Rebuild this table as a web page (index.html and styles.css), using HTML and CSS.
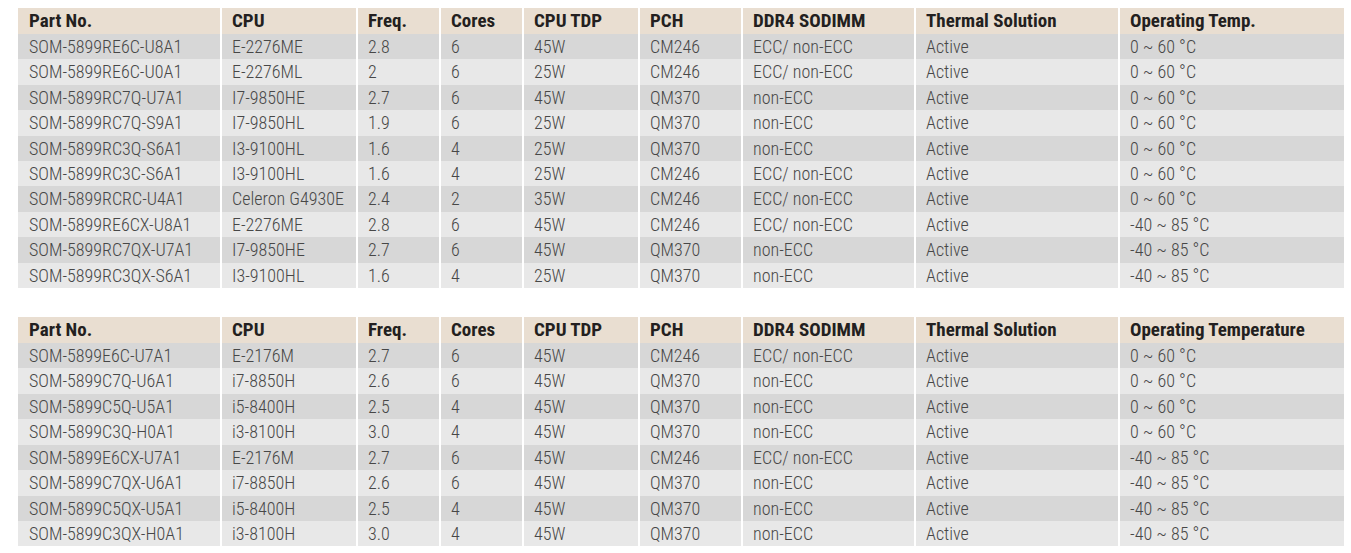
FILE: index.html
```html
<!DOCTYPE html>
<html lang="en">
<head>
<meta charset="utf-8">
<title>SOM-5899 Ordering Information</title>
<link rel="stylesheet" href="styles.css">
</head>
<body>
<div class="page">
<table class="spec">
  <colgroup>
    <col class="c1"><col class="c2"><col class="c3"><col class="c4"><col class="c5"><col class="c6"><col class="c7"><col class="c8"><col class="c9">
  </colgroup>
  <thead>
    <tr><th>Part No.</th><th>CPU</th><th>Freq.</th><th>Cores</th><th>CPU TDP</th><th>PCH</th><th>DDR4 SODIMM</th><th>Thermal Solution</th><th>Operating Temp.</th></tr>
  </thead>
  <tbody>
    <tr><td>SOM-5899RE6C-U8A1</td><td>E-2276ME</td><td>2.8</td><td>6</td><td>45W</td><td>CM246</td><td>ECC/ non-ECC</td><td>Active</td><td>0 ~ 60 °C</td></tr>
    <tr><td>SOM-5899RE6C-U0A1</td><td>E-2276ML</td><td>2</td><td>6</td><td>25W</td><td>CM246</td><td>ECC/ non-ECC</td><td>Active</td><td>0 ~ 60 °C</td></tr>
    <tr><td>SOM-5899RC7Q-U7A1</td><td>I7-9850HE</td><td>2.7</td><td>6</td><td>45W</td><td>QM370</td><td>non-ECC</td><td>Active</td><td>0 ~ 60 °C</td></tr>
    <tr><td>SOM-5899RC7Q-S9A1</td><td>I7-9850HL</td><td>1.9</td><td>6</td><td>25W</td><td>QM370</td><td>non-ECC</td><td>Active</td><td>0 ~ 60 °C</td></tr>
    <tr><td>SOM-5899RC3Q-S6A1</td><td>I3-9100HL</td><td>1.6</td><td>4</td><td>25W</td><td>QM370</td><td>non-ECC</td><td>Active</td><td>0 ~ 60 °C</td></tr>
    <tr><td>SOM-5899RC3C-S6A1</td><td>I3-9100HL</td><td>1.6</td><td>4</td><td>25W</td><td>CM246</td><td>ECC/ non-ECC</td><td>Active</td><td>0 ~ 60 °C</td></tr>
    <tr><td>SOM-5899RCRC-U4A1</td><td>Celeron G4930E</td><td>2.4</td><td>2</td><td>35W</td><td>CM246</td><td>ECC/ non-ECC</td><td>Active</td><td>0 ~ 60 °C</td></tr>
    <tr><td>SOM-5899RE6CX-U8A1</td><td>E-2276ME</td><td>2.8</td><td>6</td><td>45W</td><td>CM246</td><td>ECC/ non-ECC</td><td>Active</td><td>-40 ~ 85 °C</td></tr>
    <tr><td>SOM-5899RC7QX-U7A1</td><td>I7-9850HE</td><td>2.7</td><td>6</td><td>45W</td><td>QM370</td><td>non-ECC</td><td>Active</td><td>-40 ~ 85 °C</td></tr>
    <tr><td>SOM-5899RC3QX-S6A1</td><td>I3-9100HL</td><td>1.6</td><td>4</td><td>25W</td><td>QM370</td><td>non-ECC</td><td>Active</td><td>-40 ~ 85 °C</td></tr>
  </tbody>
</table>

<table class="spec">
  <colgroup>
    <col class="c1"><col class="c2"><col class="c3"><col class="c4"><col class="c5"><col class="c6"><col class="c7"><col class="c8"><col class="c9">
  </colgroup>
  <thead>
    <tr><th>Part No.</th><th>CPU</th><th>Freq.</th><th>Cores</th><th>CPU TDP</th><th>PCH</th><th>DDR4 SODIMM</th><th>Thermal Solution</th><th>Operating Temperature</th></tr>
  </thead>
  <tbody>
    <tr><td>SOM-5899E6C-U7A1</td><td>E-2176M</td><td>2.7</td><td>6</td><td>45W</td><td>CM246</td><td>ECC/ non-ECC</td><td>Active</td><td>0 ~ 60 °C</td></tr>
    <tr><td>SOM-5899C7Q-U6A1</td><td>i7-8850H</td><td>2.6</td><td>6</td><td>45W</td><td>QM370</td><td>non-ECC</td><td>Active</td><td>0 ~ 60 °C</td></tr>
    <tr><td>SOM-5899C5Q-U5A1</td><td>i5-8400H</td><td>2.5</td><td>4</td><td>45W</td><td>QM370</td><td>non-ECC</td><td>Active</td><td>0 ~ 60 °C</td></tr>
    <tr><td>SOM-5899C3Q-H0A1</td><td>i3-8100H</td><td>3.0</td><td>4</td><td>45W</td><td>QM370</td><td>non-ECC</td><td>Active</td><td>0 ~ 60 °C</td></tr>
    <tr><td>SOM-5899E6CX-U7A1</td><td>E-2176M</td><td>2.7</td><td>6</td><td>45W</td><td>CM246</td><td>ECC/ non-ECC</td><td>Active</td><td>-40 ~ 85 °C</td></tr>
    <tr><td>SOM-5899C7QX-U6A1</td><td>i7-8850H</td><td>2.6</td><td>6</td><td>45W</td><td>QM370</td><td>non-ECC</td><td>Active</td><td>-40 ~ 85 °C</td></tr>
    <tr><td>SOM-5899C5QX-U5A1</td><td>i5-8400H</td><td>2.5</td><td>4</td><td>45W</td><td>QM370</td><td>non-ECC</td><td>Active</td><td>-40 ~ 85 °C</td></tr>
    <tr><td>SOM-5899C3QX-H0A1</td><td>i3-8100H</td><td>3.0</td><td>4</td><td>45W</td><td>QM370</td><td>non-ECC</td><td>Active</td><td>-40 ~ 85 °C</td></tr>
  </tbody>
</table>
</div>
</body>
</html>
```

FILE: styles.css
```css
html, body {
  margin: 0;
  padding: 0;
  background: #ffffff;
}

.page {
  padding: 8px 0 0 18px;
  display: flex;
  flex-direction: column;
  gap: 29px;
}

.spec {
  width: 1326px;
  table-layout: fixed;
  border-collapse: separate;
  border-spacing: 0;
  font-family: "Roboto Condensed", "Open Sans", sans-serif;
  font-size: 18px;
}

.c1 { width: 202px; }
.c2 { width: 136px; }
.c3 { width: 83px; }
.c4 { width: 83px; }
.c5 { width: 116px; }
.c6 { width: 103px; }
.c7 { width: 173px; }
.c8 { width: 204px; }
.c9 { width: 226px; }

.spec th,
.spec td {
  box-sizing: border-box;
  padding: 0 0 0 10px;
  text-align: left;
  white-space: nowrap;
  overflow: hidden;
  vertical-align: middle;
}

.spec th + th,
.spec td + td {
  border-left: 2px solid #ffffff;
}

.spec th:first-child,
.spec td:first-child {
  padding-left: 11px;
}

.spec th {
  height: 26px;
  background: #e9ded1;
  color: #231f20;
  font-size: 19px;
  font-weight: bold;
  line-height: 26px;
}

.spec td {
  height: 25.4px;
  line-height: 25.4px;
  color: #474747;
  font-weight: 300;
}

.spec tbody tr:nth-child(odd) td {
  background: #d7d7d7;
}

.spec tbody tr:nth-child(even) td {
  background: #e8e8e8;
}
```
